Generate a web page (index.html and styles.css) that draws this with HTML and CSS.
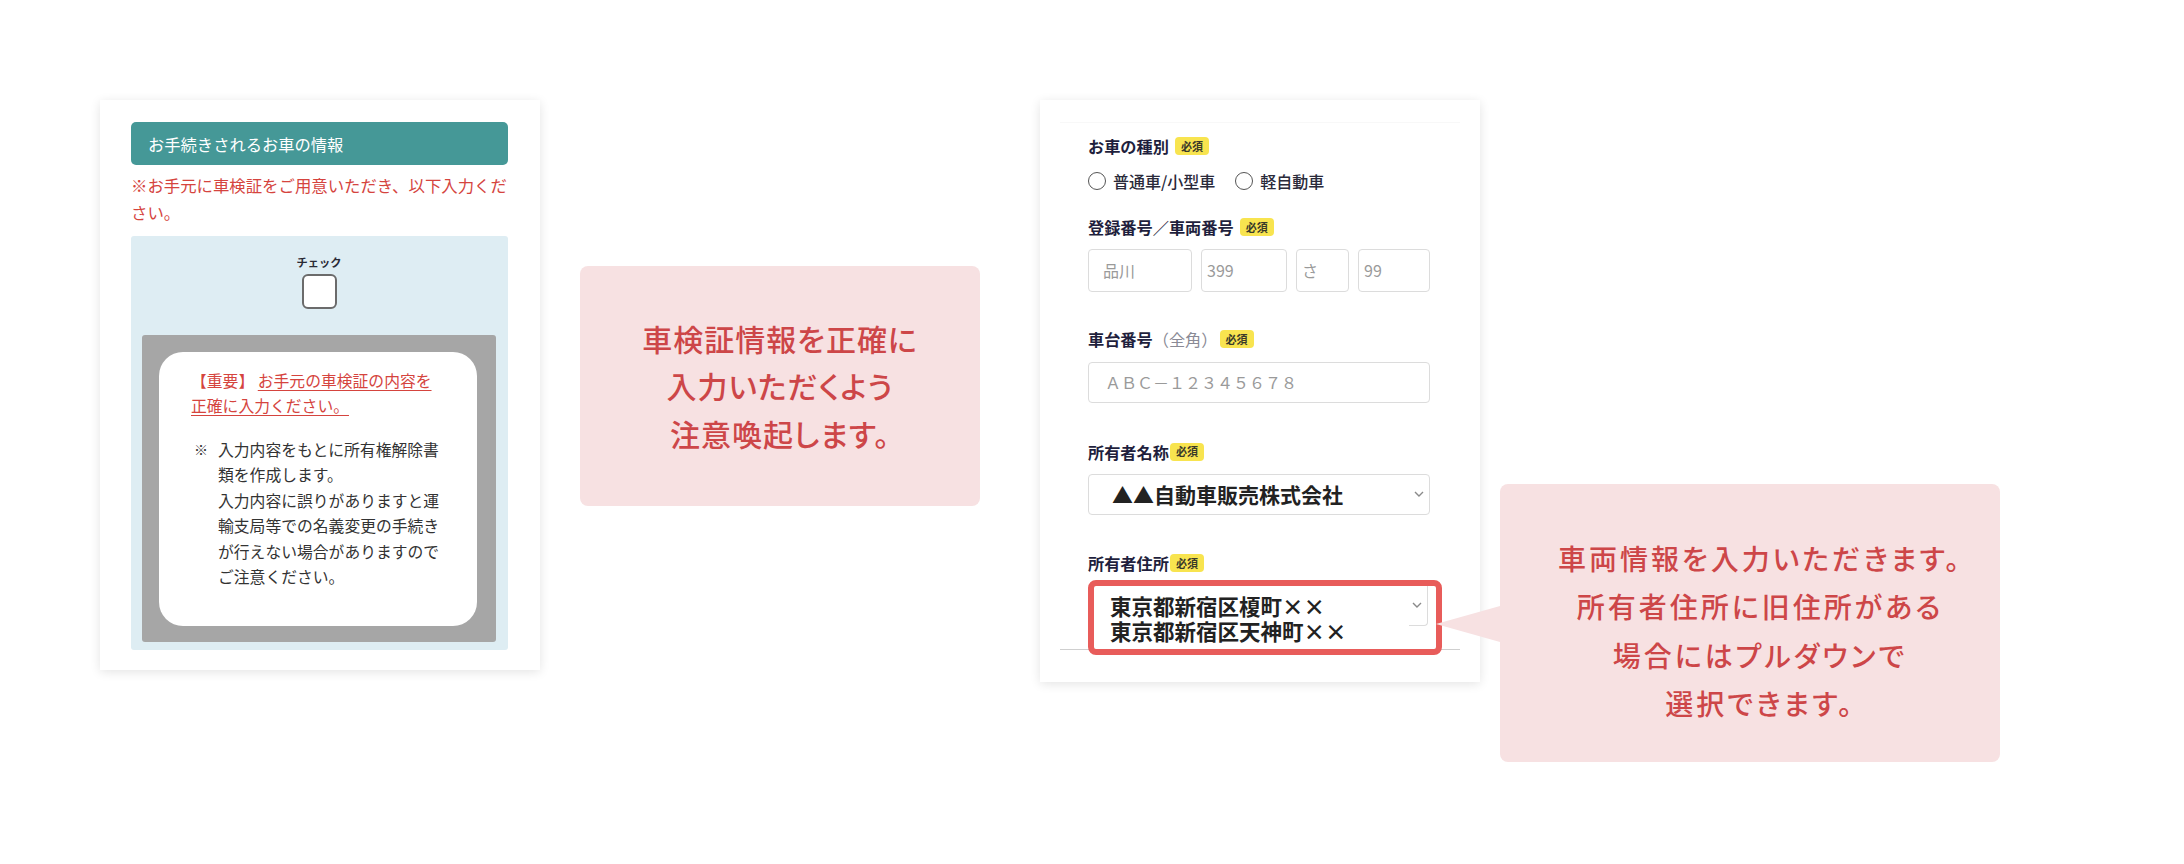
FILE: index.html
```html
<!DOCTYPE html>
<html lang="ja">
<head>
<meta charset="utf-8">
<title>車両情報入力</title>
<link rel="stylesheet" href="styles.css">
</head>
<body>
<main class="canvas">
  <section class="card card-left">
    <div class="head-bar">お手続きされるお車の情報</div>
    <p class="lead-red">※お手元に車検証をご用意いただき、以下入力くだ<br>さい。</p>
    <div class="check-area">
      <div class="check-label">チェック</div>
      <div class="check-box"></div>
      <div class="modal-dim">
        <div class="modal">
          <p class="modal-title"><span class="imp">【重要】</span> <span class="ul">お手元の車検証の内容を</span><br><span class="ul">正確に入力ください。</span></p>
          <div class="modal-note">
            <span class="kome">※</span>
            <p>入力内容をもとに所有権解除書<br>類を作成します。<br>入力内容に誤りがありますと運<br>輸支局等での名義変更の手続き<br>が行えない場合がありますので<br>ご注意ください。</p>
          </div>
        </div>
      </div>
    </div>
  </section>

  <div class="bubble bubble-mid">
    <p>車検証情報を正確に<br>入力いただくよう<br>注意喚起します。</p>
  </div>

  <section class="card card-right">
    <div class="form-sec">
      <div class="lbl lbl-1">お車の種別<span class="req">必須</span></div>
      <div class="radios">
        <span class="radio"></span><span class="radio-text">普通車/小型車</span>
        <span class="radio radio-2"></span><span class="radio-text">軽自動車</span>
      </div>

      <div class="lbl lbl-2">登録番号／車両番号<span class="req">必須</span></div>
      <div class="plate-row">
        <div class="inp inp-a">品川</div>
        <div class="inp inp-b">399</div>
        <div class="inp inp-c">さ</div>
        <div class="inp inp-d">99</div>
      </div>

      <div class="lbl lbl-3">車台番号<span class="sub">（全角）</span><span class="req req-tight">必須</span></div>
      <div class="inp inp-full">ＡＢＣ－１２３４５６７８</div>

      <div class="lbl lbl-4">所有者名称<span class="req req-none">必須</span></div>
      <div class="select">
        <span class="sel-text">▲▲自動車販売株式会社</span>
        <svg class="chev" width="10" height="6" viewBox="0 0 10 6"><polyline points="1,1 5,5 9,1" fill="none" stroke="#8a8a8a" stroke-width="1.4"/></svg>
      </div>

      <div class="lbl lbl-5">所有者住所<span class="req req-none">必須</span></div>
      <div class="hl-box">
        <div class="addr-select">
          <svg class="chev" width="10" height="6" viewBox="0 0 10 6"><polyline points="1,1 5,5 9,1" fill="none" stroke="#8a8a8a" stroke-width="1.4"/></svg>
        </div>
        <div class="addr-text">東京都新宿区榎町××<br>東京都新宿区天神町××</div>
      </div>
    </div>
  </section>

  <div class="bubble bubble-right">
    <p>車両情報を入力いただきます。<br>所有者住所に旧住所がある<br>場合にはプルダウンで<br>選択できます。</p>
  </div>
</main>
</body>
</html>
```

FILE: styles.css
```css
html, body {
  margin: 0;
  padding: 0;
  background: #ffffff;
}
body {
  width: 2184px;
  height: 864px;
  overflow: hidden;
  font-family: "Noto Sans CJK JP", "Noto Sans", sans-serif;
  color: #333;
}
p { margin: 0; }

.canvas {
  display: flex;
  align-items: flex-start;
  padding: 100px 0 0 100px;
}

.card {
  background: #fff;
  box-shadow: 0 2px 10px rgba(0, 0, 0, 0.11);
  box-sizing: border-box;
  width: 440px;
  flex: none;
}

/* ---------- left card ---------- */
.card-left {
  height: 570px;
  padding: 22px 32px 20px 31px;
}
.head-bar {
  height: 43px;
  background: #459897;
  border-radius: 5px;
  color: #fff;
  font-size: 16.3px;
  display: flex;
  align-items: center;
  padding-left: 17px;
}
.lead-red {
  margin-top: 7px;
  color: #d5443e;
  font-size: 16.4px;
  line-height: 27px;
  white-space: nowrap;
}
.check-area {
  margin-top: 10px;
  height: 414px;
  box-sizing: border-box;
  background: #deedf3;
  border-radius: 3px;
  padding: 18px 12px 8px 11px;
  display: flex;
  flex-direction: column;
}
.check-label {
  text-align: center;
  font-size: 11.2px;
  font-weight: 700;
  line-height: 16px;
  color: #2a2a35;
}
.check-box {
  margin: 4px auto 0;
  width: 35px;
  height: 35px;
  box-sizing: border-box;
  border: 2.5px solid #6b6b6b;
  border-radius: 6px;
  background: #fff;
}
.modal-dim {
  margin-top: 26px;
  background: #a6a6a6;
  border-radius: 3px;
  padding: 17px 19px 16px 17px;
}
.modal {
  background: #fff;
  border-radius: 24px;
  padding: 15.5px 20px 36px 32px;
  font-size: 15.8px;
}
.modal-title {
  line-height: 25px;
  color: #d5443e;
  white-space: nowrap;
}
.modal-title .ul {
  text-decoration: underline;
  text-underline-offset: 3px;
  text-decoration-thickness: 1px;
}
.modal-note {
  margin-top: 19px;
  display: flex;
  line-height: 25.5px;
  color: #333;
  white-space: nowrap;
}
.kome {
  width: 27px;
  flex: none;
  padding-left: 3px;
  box-sizing: border-box;
  font-size: 14px;
}

/* ---------- bubbles ---------- */
.bubble {
  flex: none;
  background: #f7e1e2;
  border-radius: 8px;
  box-sizing: border-box;
  color: #cd4648;
  font-weight: 500;
  text-align: center;
  font-feature-settings: "palt";
  display: flex;
  flex-direction: column;
  align-items: center;
}
.bubble-mid {
  margin-left: 40px;
  margin-top: 166px;
  width: 400px;
  height: 240px;
  justify-content: center;
  font-size: 30px;
  letter-spacing: 1px;
  line-height: 47.5px;
}
.bubble-right {
  position: relative;
  z-index: 2;
  margin-left: 20px;
  margin-top: 384px;
  width: 500px;
  height: 278px;
  padding-top: 50px;
  padding-left: 20px;
  font-size: 28px;
  letter-spacing: 3px;
  line-height: 48.3px;
}
.bubble-right::before {
  content: "";
  position: absolute;
  left: -64px;
  top: 122px;
  width: 0;
  height: 0;
  border-top: 18px solid transparent;
  border-bottom: 18px solid transparent;
  border-right: 64px solid #f7e1e2;
}

/* ---------- right card ---------- */
.card-right {
  margin-left: 60px;
  height: 582px;
  padding: 22px 20px 0 20px;
}
.form-sec {
  border-top: 1px solid #f8f8f8;
  border-bottom: 1px solid #cfcfcf;
  padding: 0 30px 0 28px;
  display: flex;
  flex-direction: column;
  align-items: flex-start;
}
.lbl {
  height: 24px;
  line-height: 24px;
  font-size: 16.2px;
  font-weight: 700;
  color: #1f1f3d;
  display: flex;
  align-items: center;
  white-space: nowrap;
}
.lbl-1 { margin-top: 11px; }
.lbl-2 { margin-top: 22.6px; }
.lbl-3 { margin-top: 35.6px; }
.lbl-4 { margin-top: 36.4px; }
.lbl-5 { margin-top: 36.3px; }
.lbl .sub {
  font-weight: 400;
  color: #8a8a95;
}
.req {
  display: inline-flex;
  align-items: center;
  justify-content: center;
  width: 34px;
  height: 18px;
  margin-left: 6px;
  border-radius: 4px;
  background: #f8e44f;
  color: #3a3a2a;
  font-size: 11px;
  font-weight: 700;
  line-height: 1;
}
.req-tight { margin-left: 2px; }
.req-none { margin-left: 1px; }

.radios {
  margin-top: 10.7px;
  height: 24px;
  display: flex;
  align-items: center;
  font-size: 16px;
  font-weight: 500;
  color: #2a2a3a;
  white-space: nowrap;
}
.radio {
  width: 18px;
  height: 18px;
  box-sizing: border-box;
  border: 1.5px solid #555;
  border-radius: 50%;
  background: #fff;
  margin-right: 7px;
  flex: none;
}
.radio-2 { margin-left: 20px; }

.plate-row {
  margin-top: 10px;
  display: flex;
  gap: 9px;
}
.inp {
  height: 42.4px;
  box-sizing: border-box;
  border: 1.5px solid #dcdcdc;
  border-radius: 4px;
  display: flex;
  align-items: center;
  padding-left: 5px;
  font-size: 16px;
  color: #9a9a9a;
  white-space: nowrap;
}
.inp-a { width: 104px; padding-left: 14px; }
.inp-b { width: 86px; }
.inp-c { width: 53px; }
.inp-d { width: 72px; }
.inp-full {
  margin-top: 10.4px;
  width: 342px;
  height: 41.6px;
  padding-left: 16px;
}

.select {
  margin-top: 10.3px;
  width: 342px;
  height: 41px;
  box-sizing: border-box;
  border: 1.5px solid #dcdcdc;
  border-radius: 4px;
  display: flex;
  align-items: center;
  justify-content: space-between;
  padding: 0 5px 0 23px;
}
.sel-text {
  font-size: 21px;
  font-weight: 700;
  color: #222;
  white-space: nowrap;
}
.chev { display: block; flex: none; }

.hl-box {
  position: relative;
  z-index: 1;
  margin-top: 4.7px;
  margin-bottom: -6.3px;
  width: 353.5px;
  height: 75.3px;
  box-sizing: border-box;
  border: 6.5px solid #e85c5a;
  border-radius: 8px;
  background: #fff;
}
.addr-select {
  width: 334px;
  height: 40px;
  box-sizing: border-box;
  border-right: 1.5px solid #dcdcdc;
  border-bottom: 1.5px solid #dcdcdc;
  border-bottom-right-radius: 4px;
  display: flex;
  align-items: center;
  justify-content: flex-end;
  padding-right: 5px;
}
.addr-text {
  margin-top: -31.5px;
  width: 315px;
  box-sizing: border-box;
  background: #fff;
  padding-left: 16px;
  font-size: 21.5px;
  font-weight: 700;
  line-height: 24.6px;
  color: #222;
  white-space: nowrap;
}
```
